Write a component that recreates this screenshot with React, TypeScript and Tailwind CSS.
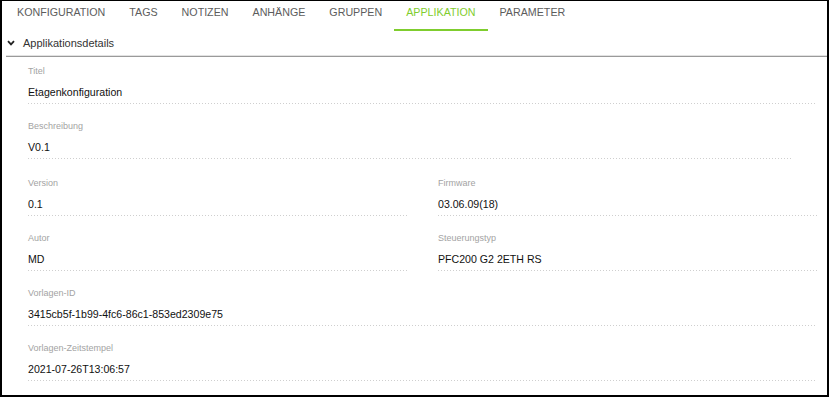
import React from "react"

const tabs = ["KONFIGURATION", "TAGS", "NOTIZEN", "ANHÄNGE", "GRUPPEN", "APPLIKATION", "PARAMETER"]

function Dots() {
  return (
    <div className="mt-[4px] h-px w-full bg-[linear-gradient(to_right,#cfcfcf_1px,transparent_1px)] bg-[length:3px_1px] bg-repeat-x" />
  )
}

function Field({ label, value, className = "" }: { label: string; value: string; className?: string }) {
  return (
    <div className={className}>
      <div className="text-[9px] leading-[12px] text-[#a3a3a3]">{label}</div>
      <div className="mt-[8px] text-[10.6px] leading-[14px] text-[#111]">{value}</div>
      <Dots />
    </div>
  )
}

export default function App() {
  return (
    <div className="w-[829px] h-[397px] bg-white border-black border-t border-l-2 border-r-2 border-b-2 font-['Liberation_Sans',Arial,sans-serif] overflow-hidden">
      {/* Tabs */}
      <div className="flex pl-[3px]">
        {tabs.map((t) => {
          const active = t === "APPLIKATION"
          return (
            <div
              key={t}
              className={
                active
                  ? "h-[30px] px-3 pt-[4px] text-[10.7px] leading-[15px] text-[#7fcd2e] border-b-2 border-[#7fcd2e]"
                  : "h-[30px] px-3 pt-[4px] text-[10.7px] leading-[15px] text-[#5c5c5c] border-b-2 border-transparent"
              }
            >
              {t}
            </div>
          )
        })}
      </div>

      {/* Section header */}
      <div className="ml-[4px]">
        <div className="h-[24px] flex items-center gap-[8px] pl-[1px] text-[11px] text-[#333]">
          <svg width="8" height="6" viewBox="0 0 8 6" className="shrink-0">
            <polyline points="1,1.2 4,4.4 7,1.2" fill="none" stroke="#222" strokeWidth="1.8" />
          </svg>
          <span>Applikationsdetails</span>
        </div>
        <div className="h-px bg-[#e2e2e2]" />
        <div className="h-px bg-[#9a9a9a]" />
      </div>

      {/* Fields */}
      <div className="pt-[8px] pl-[26px] pr-[10px] grid grid-cols-2 gap-x-[31px] gap-y-[16px]">
        <Field className="col-span-2" label="Titel" value="Etagenkonfiguration" />
        <Field className="col-span-2 mr-[25px] mb-[2px]" label="Beschreibung" value="V0.1" />
        <Field label="Version" value="0.1" />
        <Field label="Firmware" value="03.06.09(18)" />
        <Field label="Autor" value="MD" />
        <Field label="Steuerungstyp" value="PFC200 G2 2ETH RS" />
        <Field className="col-span-2" label="Vorlagen-ID" value="3415cb5f-1b99-4fc6-86c1-853ed2309e75" />
        <Field className="col-span-2" label="Vorlagen-Zeitstempel" value="2021-07-26T13:06:57" />
      </div>
    </div>
  )
}
